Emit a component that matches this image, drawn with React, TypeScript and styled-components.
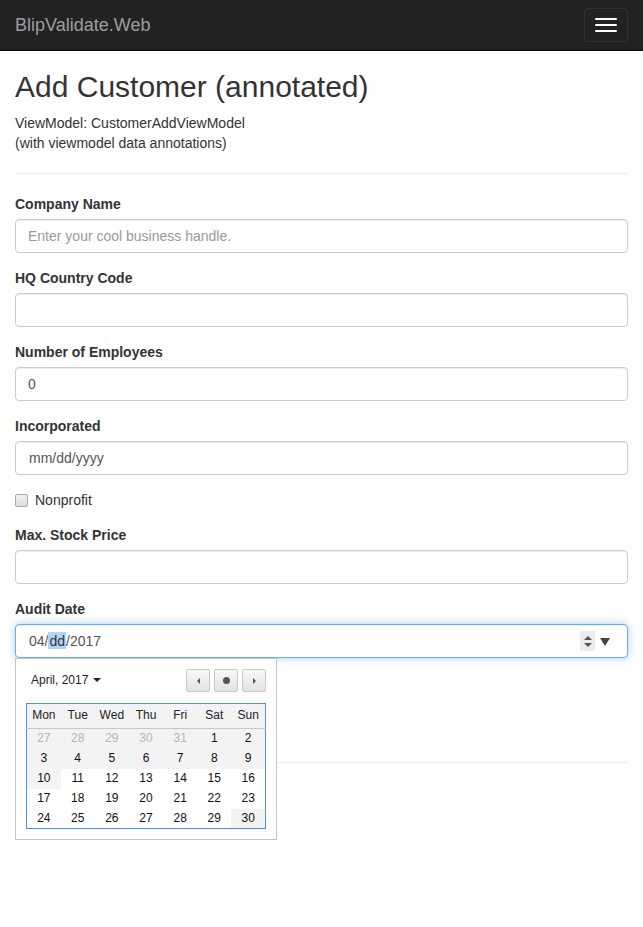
import React from "react";
import styled, { createGlobalStyle } from "styled-components";

const GlobalStyle = createGlobalStyle`
  * { box-sizing: border-box; }
  html, body { margin: 0; padding: 0; background: #fff; }
  body {
    font-family: "Liberation Sans", Arial, sans-serif;
    font-size: 14px;
    line-height: 1.42857143;
    color: #333;
  }
`;

const Page = styled.div`
  min-height: 927px;
`;

const Navbar = styled.nav`
  height: 51px;
  background: #222;
  border-bottom: 1px solid #080808;
  display: flex;
  align-items: center;
  justify-content: space-between;
  padding: 0 15px;
`;

const Brand = styled.a`
  font-size: 18px;
  line-height: 20px;
  color: #9d9d9d;
  text-decoration: none;
  margin-top: -1px;
`;

const Toggle = styled.button`
  width: 44px;
  height: 34px;
  margin-top: -1px;
  padding: 9px 10px;
  background: transparent;
  border: 1px solid #333;
  border-radius: 4px;
  display: flex;
  flex-direction: column;
  justify-content: center;
  align-items: center;
  gap: 4px;
`;

const Bar = styled.span`
  display: block;
  width: 22px;
  height: 2px;
  background: #fff;
  border-radius: 1px;
`;

const Container = styled.main`
  padding: 0 15px;
`;

const Title = styled.h2`
  margin: 19px 0 10px;
  font-size: 30px;
  font-weight: 500;
  line-height: 1.1;
  color: #333;
`;

const Intro = styled.p`
  margin: 0 0 10px;
`;

const Rule = styled.hr`
  margin: 20px 0;
  border: 0;
  border-top: 1px solid #eee;
`;

const FormGroup = styled.div<{ $anchor?: boolean }>`
  margin-bottom: 15px;
  position: ${(p) => (p.$anchor ? "relative" : "static")};
`;

const Label = styled.label`
  display: inline-block;
  margin-bottom: 5px;
  font-weight: 700;
`;

const TextInput = styled.input`
  display: block;
  width: 100%;
  height: 34px;
  padding: 6px 12px;
  font-family: inherit;
  font-size: 14px;
  line-height: 1.42857143;
  color: #555;
  background: #fff;
  border: 1px solid #ccc;
  border-radius: 4px;
  box-shadow: inset 0 1px 1px rgba(0, 0, 0, 0.075);
  outline: none;
  &::placeholder { color: #999; opacity: 1; }
`;

const DateField = styled.div<{ $focused?: boolean }>`
  display: flex;
  align-items: center;
  width: 100%;
  height: 34px;
  padding: 0 17px 0 13px;
  font-size: 14px;
  color: #555;
  background: #fff;
  border: 1px solid ${(p) => (p.$focused ? "#66afe9" : "#ccc")};
  border-radius: 4px;
  box-shadow: ${(p) =>
    p.$focused
      ? "inset 0 1px 1px rgba(0,0,0,.075), 0 0 8px rgba(102,175,233,.6)"
      : "inset 0 1px 1px rgba(0,0,0,.075)"};
`;

const DateText = styled.span`
  flex: 1;
  white-space: pre;
`;

const Selected = styled.span`
  background: #b5d4fb;
  color: #333;
  padding: 1px 1px 0;
`;

const Spinner = styled.span`
  width: 15px;
  height: 20px;
  background: #ececec;
  display: flex;
  flex-direction: column;
  align-items: center;
  justify-content: center;
  gap: 3px;
  margin-right: 5px;
`;

const Tri = styled.span<{ $dir: "up" | "down" | "left" | "right"; $size: number; $color: string }>`
  width: 0;
  height: 0;
  display: block;
  ${(p) =>
    p.$dir === "up"
      ? `border-left:${p.$size}px solid transparent;border-right:${p.$size}px solid transparent;border-bottom:${p.$size}px solid ${p.$color};`
      : p.$dir === "down"
      ? `border-left:${p.$size}px solid transparent;border-right:${p.$size}px solid transparent;border-top:${p.$size}px solid ${p.$color};`
      : p.$dir === "left"
      ? `border-top:${p.$size}px solid transparent;border-bottom:${p.$size}px solid transparent;border-right:${p.$size}px solid ${p.$color};`
      : `border-top:${p.$size}px solid transparent;border-bottom:${p.$size}px solid transparent;border-left:${p.$size}px solid ${p.$color};`}
`;

const DropArrow = styled.span`
  width: 0;
  height: 0;
  border-left: 5px solid transparent;
  border-right: 5px solid transparent;
  border-top: 8px solid #444;
  margin-top: 1px;
`;

const CheckRow = styled.div`
  margin: 0 0 15px;
  display: flex;
  align-items: center;
  height: 20px;
`;

const CheckLabel = styled.label`
  display: flex;
  align-items: center;
  cursor: pointer;
`;

const Check = styled.input`
  appearance: none;
  -webkit-appearance: none;
  width: 13px;
  height: 13px;
  margin: 0 7px 0 0;
  border: 1px solid #a9a9a9;
  border-radius: 2px;
  background: linear-gradient(#f0f0f0, #dcdcdc);
`;

const Popup = styled.div`
  position: absolute;
  top: 59px;
  left: 0;
  width: 262px;
  padding: 10px;
  background: #fff;
  border: 1px solid #c4c4c4;
  z-index: 10;
`;

const PopupHead = styled.div`
  display: flex;
  align-items: center;
  justify-content: space-between;
  height: 23px;
  margin-bottom: 11px;
`;

const MonthPick = styled.span`
  display: flex;
  align-items: center;
  gap: 5px;
  font-size: 12px;
  color: #222;
  padding-left: 5px;
`;

const NavGroup = styled.div`
  display: flex;
  gap: 4px;
`;

const NavBtn = styled.button`
  width: 24px;
  height: 23px;
  padding: 0;
  border: 1px solid #c8c8c8;
  border-radius: 2px;
  background: linear-gradient(#f8f8f8, #e3e3e3);
  display: flex;
  align-items: center;
  justify-content: center;
`;

const Dot = styled.span`
  width: 7px;
  height: 7px;
  border-radius: 50%;
  background: #555;
`;

const Cal = styled.table`
  width: 240px;
  border-collapse: collapse;
  border: 1px solid #4f8df0;
  font-size: 12px;
  table-layout: fixed;
`;

const HeadCell = styled.th`
  height: 25px;
  padding: 0;
  font-weight: 400;
  color: #222;
  background: #f3f3f3;
  border-bottom: 1px solid #c8c8c8;
  text-align: center;
`;

const DayCell = styled.td<{ $muted?: boolean; $shaded?: boolean }>`
  height: 20px;
  padding: 0;
  text-align: center;
  color: ${(p) => (p.$muted ? "#b5b5b5" : "#111")};
  background: ${(p) => (p.$shaded ? "#f3f3f3" : "#fff")};
`;

const ActionsSpacer = styled.div`
  min-height: 69px;
`;

const weekDays = ["Mon", "Tue", "Wed", "Thu", "Fri", "Sat", "Sun"];

type Day = { n: number; muted?: boolean; shaded?: boolean };

const weeks: Day[][] = [
  [27, 28, 29, 30, 31].map((n) => ({ n, muted: true, shaded: true })).concat([
    { n: 1, shaded: true },
    { n: 2, shaded: true },
  ]),
  [3, 4, 5, 6, 7, 8, 9].map((n) => ({ n, shaded: true })),
  [10, 11, 12, 13, 14, 15, 16].map((n) => ({ n, shaded: n === 10 })),
  [17, 18, 19, 20, 21, 22, 23].map((n) => ({ n })),
  [24, 25, 26, 27, 28, 29, 30].map((n) => ({ n, shaded: n === 30 })),
];

function Calendar() {
  return (
    <Popup>
      <PopupHead>
        <MonthPick>
          April, 2017
          <Tri $dir="down" $size={4} $color="#222" />
        </MonthPick>
        <NavGroup>
          <NavBtn aria-label="previous">
            <Tri $dir="left" $size={3} $color="#555" />
          </NavBtn>
          <NavBtn aria-label="today">
            <Dot />
          </NavBtn>
          <NavBtn aria-label="next">
            <Tri $dir="right" $size={3} $color="#555" />
          </NavBtn>
        </NavGroup>
      </PopupHead>
      <Cal>
        <thead>
          <tr>
            {weekDays.map((d) => (
              <HeadCell key={d}>{d}</HeadCell>
            ))}
          </tr>
        </thead>
        <tbody>
          {weeks.map((w, i) => (
            <tr key={i}>
              {w.map((d, j) => (
                <DayCell key={j} $muted={d.muted} $shaded={d.shaded}>
                  {d.n}
                </DayCell>
              ))}
            </tr>
          ))}
        </tbody>
      </Cal>
    </Popup>
  );
}

export default function App() {
  return (
    <Page>
      <GlobalStyle />
      <Navbar>
        <Brand href="#">BlipValidate.Web</Brand>
        <Toggle aria-label="Toggle navigation">
          <Bar />
          <Bar />
          <Bar />
        </Toggle>
      </Navbar>
      <Container>
        <Title>Add Customer (annotated)</Title>
        <Intro>
          ViewModel: CustomerAddViewModel
          <br />
          (with viewmodel data annotations)
        </Intro>
        <Rule />
        <form onSubmit={(e) => e.preventDefault()}>
          <FormGroup>
            <Label>Company Name</Label>
            <TextInput placeholder="Enter your cool business handle." />
          </FormGroup>
          <FormGroup>
            <Label>HQ Country Code</Label>
            <TextInput />
          </FormGroup>
          <FormGroup>
            <Label>Number of Employees</Label>
            <TextInput defaultValue="0" />
          </FormGroup>
          <FormGroup>
            <Label>Incorporated</Label>
            <DateField>
              <DateText>mm/dd/yyyy</DateText>
            </DateField>
          </FormGroup>
          <CheckRow>
            <CheckLabel>
              <Check type="checkbox" />
              Nonprofit
            </CheckLabel>
          </CheckRow>
          <FormGroup>
            <Label>Max. Stock Price</Label>
            <TextInput />
          </FormGroup>
          <FormGroup $anchor>
            <Label>Audit Date</Label>
            <DateField $focused>
              <DateText>
                04/<Selected>dd</Selected>/2017
              </DateText>
              <Spinner>
                <Tri $dir="up" $size={4} $color="#555" />
                <Tri $dir="down" $size={4} $color="#555" />
              </Spinner>
              <DropArrow />
            </DateField>
            <Calendar />
          </FormGroup>
          <ActionsSpacer />
        </form>
        <Rule />
      </Container>
    </Page>
  );
}
